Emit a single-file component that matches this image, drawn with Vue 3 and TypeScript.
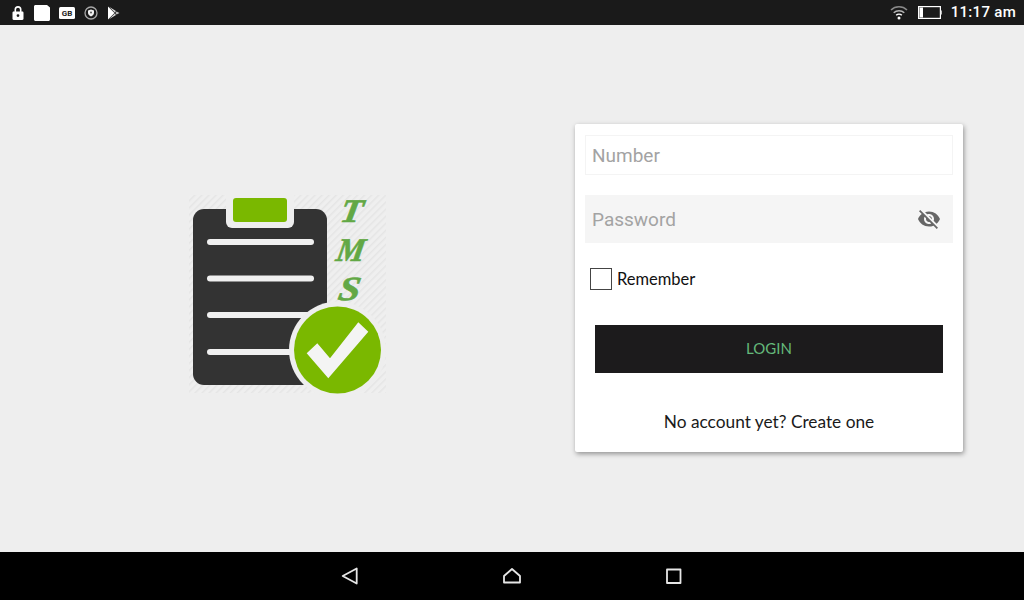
<script setup lang="ts">
const lineRows: number[] = [242, 278.5, 315, 352]
</script>

<template>
  <div class="screen">
    <header class="status">
      <div class="status-group left">
        <svg class="ico" width="14" height="16" viewBox="0 0 14 16"><path fill="#fff" d="M3.500 6.500V4.600a3.500 3.500 0 0 1 7 0v1.900h.8c.7 0 1.200.5 1.200 1.200v6.100c0 .7-.5 1.200-1.200 1.200H2.700c-.7 0-1.200-.5-1.200-1.200V7.700c0-.7.5-1.200 1.200-1.200zm1.600 0h3.800V4.600a1.900 1.900 0 0 0-3.800 0zM7 9.200a1.400 1.400 0 1 0 0 2.800 1.400 1.400 0 0 0 0-2.800z"/></svg>
        <svg class="ico" width="16" height="16" viewBox="0 0 16 16"><path fill="#fff" d="M1.500 0H13l3 2.500V14.500c0 .8-.7 1.500-1.500 1.500h-13C.7 16 0 15.300 0 14.500v-13C0 .7.700 0 1.500 0z"/></svg>
        <svg class="ico" width="16" height="12" viewBox="0 0 16 12"><rect width="16" height="12" rx="1.500" fill="#fff"/><text x="8" y="9" text-anchor="middle" class="gb">GB</text></svg>
        <svg class="ico" width="14" height="14" viewBox="0 0 14 14"><circle cx="7" cy="7" r="6" fill="none" stroke="#a8a8a8" stroke-width="1.300"/><path fill="#f0f0f0" d="M7 3.500l3 1v2.300c0 1.700-1.300 3-3 3.700-1.700-.7-3-2-3-3.700V4.500z"/><circle cx="7" cy="6.500" r="1" fill="#555"/></svg>
        <svg class="ico" width="13" height="14" viewBox="0 0 13 14"><path fill="#fff" d="M1 .5L7.500 7 1 13.500z"/><path fill="#d8d8d8" d="M2 .8L9 5 7.800 6.500zM2 13.200L9 9 7.800 7.500z"/><path fill="#bdbdbd" d="M9.600 5.400L12.500 7 9.600 8.600 8.300 7z"/></svg>
      </div>
      <div class="status-group right">
        <svg class="wifi" width="18" height="15" viewBox="0 0 18 15"><g fill="none" stroke-width="1.500"><path stroke="#8a8a8a" d="M1 5a11.500 11.500 0 0 1 16 0"/><path stroke="#b5b5b5" d="M3.700 7.800a7.700 7.700 0 0 1 10.600 0"/><path stroke="#fff" d="M6.200 10.300a4 4 0 0 1 5.600 0"/></g><circle cx="9" cy="13" r="1.500" fill="#fff"/></svg>
        <svg class="battery" width="24" height="13" viewBox="0 0 24 13"><rect x=".6" y=".6" width="21.800" height="11.800" fill="none" stroke="#fff" stroke-width="1.200"/><rect x="1.500" y="1.500" width="3.500" height="10" fill="#fff"/><rect x="22.800" y="4.500" width="1.200" height="4" fill="#bbb"/></svg>
        <span class="time">11:17 am</span>
      </div>
    </header>

    <main class="main">
      <div class="logo-pane">
        <svg class="logo" width="197" height="198" viewBox="189 195 197 198">
          <defs>
            <pattern id="hatch" width="5" height="5" patternUnits="userSpaceOnUse" patternTransform="rotate(-45)">
              <rect width="5" height="5" fill="#efefef"/>
              <rect width="5" height="1.500" fill="#e5e5e5"/>
            </pattern>
          </defs>
          <rect x="189" y="195" width="197" height="198" fill="url(#hatch)"/>
          <rect x="193" y="209" width="134" height="176" rx="11" fill="#333333"/>
          <path d="M226 195h68v27a6 6 0 0 1-6 6h-56a6 6 0 0 1-6-6z" fill="#eeeeee"/>
          <rect x="233" y="198" width="54" height="24" rx="3" fill="#7ab800"/>
          <rect v-for="y in lineRows" :key="y" x="207" :y="y - 3" width="107" height="6" rx="3" fill="#f0f0f0"/>
          <circle cx="337.500" cy="350" r="48.500" fill="#eeeeee"/>
          <circle cx="337.500" cy="350" r="43.500" fill="#7ab800"/>
          <path d="M306.700 353.300L317.300 343.300L330 358.300L358.300 322.300L368.300 331.700L328.300 378.300z" fill="#f4f4f4"/>
          <text transform="translate(339 222) skewX(-10) scale(1.100 1)" class="tms t">T</text>
          <text transform="translate(335 261) skewX(-10) scale(.96 1)" class="tms m">M</text>
          <text transform="translate(337 300) skewX(-10) scale(1.150 1)" class="tms s">S</text>
        </svg>
      </div>

      <section class="card">
        <input class="field number" type="text" placeholder="Number" />
        <div class="field password">
          <input class="password-input" type="password" placeholder="Password" />
          <svg width="24" height="24" viewBox="0 0 24 24"><path fill="#666666" d="M12 7c2.760 0 5 2.240 5 5 0 .65-.13 1.260-.36 1.830l2.920 2.920c1.510-1.260 2.700-2.890 3.430-4.750-1.730-4.390-6-7.500-11-7.500-1.400 0-2.740.25-3.980.7l2.160 2.160C10.740 7.130 11.350 7 12 7zM2 4.270l2.280 2.280.46.46C3.080 8.300 1.780 10.020 1 12c1.730 4.390 6 7.500 11 7.500 1.550 0 3.030-.3 4.380-.84l.42.42L19.730 22 21 20.730 3.270 3 2 4.270zM7.530 9.800l1.550 1.550c-.05.21-.08.43-.08.65 0 1.660 1.340 3 3 3 .22 0 .44-.03.65-.08l1.550 1.550c-.67.33-1.410.53-2.200.53-2.760 0-5-2.240-5-5 0-.79.2-1.530.53-2.200zm4.310-.78l3.150 3.150.02-.16c0-1.660-1.340-3-3-3l-.17.01z"/></svg>
        </div>
        <label class="remember">
          <input class="check" type="checkbox" />
          <span>Remember</span>
        </label>
        <button class="login" type="button">LOGIN</button>
        <p class="signup">No account yet? Create one</p>
      </section>
    </main>

    <nav class="navbar">
      <svg width="20" height="20" viewBox="0 0 20 20"><path d="M16.700 2.500v15L2.700 10z" fill="none" stroke="#e6e6e6" stroke-width="1.800" stroke-linejoin="round"/></svg>
      <svg width="20" height="20" viewBox="0 0 20 20"><path d="M2 16.500V10l8-7 8 7v6.500z" fill="none" stroke="#e6e6e6" stroke-width="1.800" stroke-linejoin="round"/></svg>
      <svg width="20" height="20" viewBox="0 0 20 20"><rect x="3" y="3.500" width="13.500" height="13.500" fill="none" stroke="#e6e6e6" stroke-width="1.800" stroke-linejoin="round"/></svg>
    </nav>
  </div>
</template>

<style scoped>
.screen {
  width: 1024px;
  height: 600px;
  display: flex;
  flex-direction: column;
  overflow: hidden;
  background: #eeeeee;
  font-family: "Lato", "Open Sans", sans-serif;
}
.status {
  height: 25px;
  flex: none;
  display: flex;
  align-items: center;
  justify-content: space-between;
  background: #1a1a1a;
  padding: 0 8px 0 11px;
}
.status-group {
  display: flex;
  align-items: center;
}
.left {
  gap: 9px;
}
.ico {
  display: block;
}
.gb {
  font: 700 8px "Roboto", sans-serif;
  fill: #222;
}
.wifi {
  margin-right: 10px;
}
.battery {
  margin-right: 9px;
}
.time {
  color: #fff;
  font: 500 15px/25px "Roboto", sans-serif;
  letter-spacing: 0.3px;
}
.main {
  flex: 1;
  display: flex;
  align-items: center;
}
.logo-pane {
  width: 575px;
  display: flex;
  justify-content: center;
  padding-top: 11px;
}
.logo {
  display: block;
  overflow: visible;
}
.tms {
  font-family: "Liberation Serif", serif;
  font-style: italic;
  font-weight: 700;
  fill: #62a845;
  stroke: #62a845;
  stroke-width: 0.6px;
}
.t {
  font-size: 33px;
}
.m {
  font-size: 33px;
}
.s {
  font-size: 34px;
}
.card {
  width: 388px;
  height: 328px;
  margin-top: -1px;
  box-sizing: border-box;
  background: #fff;
  border-radius: 2px;
  box-shadow: 1px 2px 5px rgba(0, 0, 0, 0.38);
  padding: 11px 10px 0;
  display: flex;
  flex-direction: column;
}
.field {
  box-sizing: border-box;
  width: 368px;
  font: 400 19px "Roboto", sans-serif;
  color: #333;
}
.number {
  height: 40px;
  border: 1px solid #f4f4f4;
  background: #fff;
  padding: 0 6px;
  outline: none;
  margin-bottom: 20px;
}
.password {
  height: 48px;
  background: #f5f5f5;
  display: flex;
  align-items: center;
  padding: 0 12px 0 7px;
  margin-bottom: 25px;
}
.password-input {
  flex: 1;
  min-width: 0;
  border: 0;
  outline: none;
  padding: 0;
  background: transparent;
  font: inherit;
}
input::placeholder {
  color: #a3a3a3;
  opacity: 1;
}
.remember {
  display: flex;
  align-items: center;
  gap: 5px;
  height: 22px;
  padding-left: 5px;
  font-size: 16.500px;
  color: #111;
}
.check {
  appearance: none;
  box-sizing: border-box;
  width: 22px;
  height: 22px;
  margin: 0;
  border: 1px solid #444;
  background: #fff;
}
.login {
  width: 348px;
  height: 48px;
  margin: 35px 0 0 10px;
  border: 0;
  padding: 0 0 2px;
  background: #1c1b1c;
  color: #64b87a;
  font: 400 15px "Lato", sans-serif;
}
.signup {
  margin: 38px 0 0;
  text-align: center;
  font-size: 17.300px;
  line-height: 22px;
  color: #1a1a1a;
}
.navbar {
  height: 48px;
  flex: none;
  background: #000;
  display: flex;
  align-items: center;
  justify-content: center;
  gap: 142px;
}
</style>
